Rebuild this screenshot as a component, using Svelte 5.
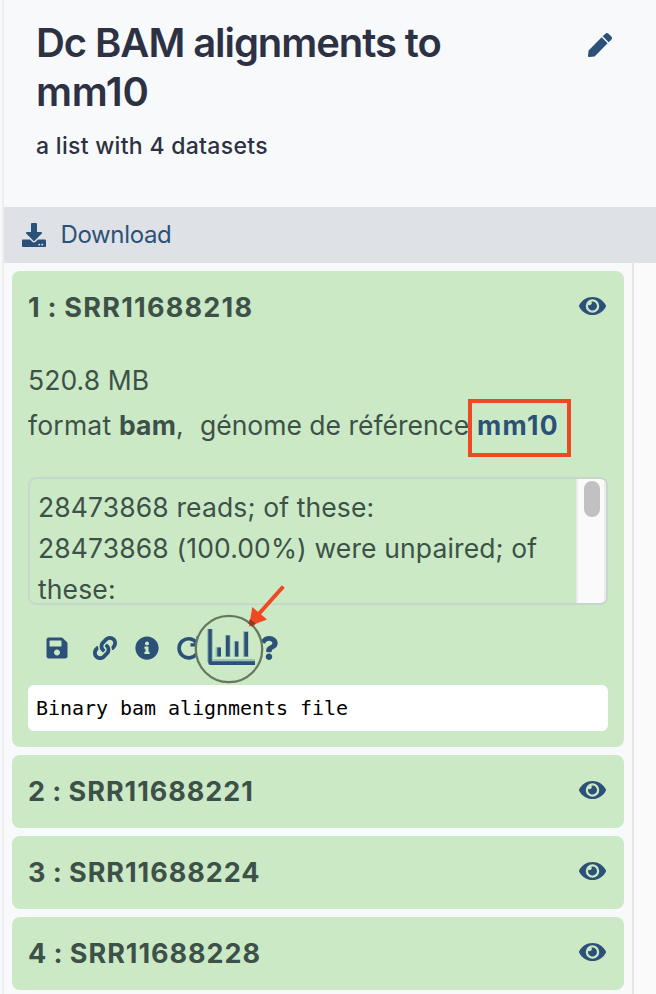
<script>
  const datasets = [
    { id: 2, name: 'SRR11688221' },
    { id: 3, name: 'SRR11688224' },
    { id: 4, name: 'SRR11688228' }
  ];
</script>

{#snippet eye()}
  <svg class="eye" viewBox="0 0 576 512"><path d="M572.52 241.4C518.29 135.59 410.93 64 288 64S57.68 135.64 3.48 241.41a32.35 32.35 0 0 0 0 29.19C57.71 376.41 165.07 448 288 448s230.32-71.64 284.52-177.41a32.35 32.35 0 0 0 0-29.19zM288 400a144 144 0 1 1 144-144 143.93 143.93 0 0 1-144 144zm0-240a95.31 95.31 0 0 0-25.31 3.79 47.85 47.85 0 0 1-66.9 66.9A95.78 95.78 0 1 0 288 160z"/></svg>
{/snippet}

<main class="panel">
  <header>
    <div class="heading">
      <h1>Dc BAM alignments to<br /><span class="build">mm10</span></h1>
      <svg class="pen" viewBox="0 0 512 512"><path d="M290.74 93.24l128.02 128.02-277.99 277.99-114.14 12.6C11.35 513.54-1.56 500.62.14 485.34l12.7-114.22 277.9-277.88zm207.2-19.06l-60.11-60.11c-18.75-18.75-49.16-18.75-67.91 0l-56.55 56.55 128.02 128.02 56.55-56.55c18.75-18.76 18.75-49.16 0-67.91z"/></svg>
    </div>
    <p class="subtitle">a list with 4 datasets</p>
  </header>

  <nav>
    <svg class="download" viewBox="0 0 512 512"><path d="M216 0h80c13.3 0 24 10.7 24 24v168h87.7c17.8 0 26.7 21.5 14.1 34.1L269.7 378.3c-7.5 7.5-19.8 7.5-27.3 0L90.1 226.1c-12.6-12.6-3.7-34.1 14.1-34.1H192V24c0-13.3 10.7-24 24-24zm296 376v112c0 13.3-10.7 24-24 24H24c-13.3 0-24-10.7-24-24V376c0-13.3 10.7-24 24-24h146.7l49 49c20.1 20.1 52.5 20.1 72.6 0l49-49H488c13.3 0 24 10.7 24 24zm-124 88c0-11-9-20-20-20s-20 9-20 20 9 20 20 20 20-9 20-20zm64 0c0-11-9-20-20-20s-20 9-20 20 9 20 20 20 20-9 20-20z"/></svg>
    <span>Download</span>
  </nav>

  <div class="body">
    <div class="list">
      <section class="card open">
        <div class="title"><h2 class="first">1 : SRR11688218</h2>{@render eye()}</div>
        <div class="size">520.8 MB</div>
        <div class="meta">
          <span class="format">format <b>bam</b>,</span><span class="genome">génome de référence</span><b class="ref">mm10</b>
        </div>
        <div class="log">
          <div class="lines">
            <div>28473868 reads; of these:</div>
            <div>28473868 (100.00%) were unpaired; of</div>
            <div>these:</div>
          </div>
          <div class="track"><div class="thumb"></div></div>
        </div>
        <div class="actions">
          <svg class="save" viewBox="0 0 448 512"><path d="M433.941 129.941l-83.882-83.882A48 48 0 0 0 316.118 32H48C21.49 32 0 53.49 0 80v352c0 26.51 21.49 48 48 48h352c26.51 0 48-21.49 48-48V163.882a48 48 0 0 0-14.059-33.941zM224 416c-35.346 0-64-28.654-64-64 0-35.346 28.654-64 64-64s64 28.654 64 64c0 35.346-28.654 64-64 64zm96-304.52V212c0 6.627-5.373 12-12 12H76c-6.627 0-12-5.373-12-12V108c0-6.627 5.373-12 12-12h228.52c3.183 0 6.235 1.264 8.485 3.515l3.48 3.48A11.996 11.996 0 0 1 320 111.48z"/></svg>
          <svg class="link" viewBox="0 0 512 512"><path d="M326.612 185.391c59.747 59.809 58.927 155.698.36 214.59-.11.12-.24.25-.36.37l-67.2 67.2c-59.27 59.27-155.699 59.262-214.96 0-59.27-59.26-59.27-155.7 0-214.96l37.106-37.106c9.84-9.84 26.786-3.3 27.294 10.606.648 17.722 3.826 35.527 9.69 52.721 1.986 5.822.567 12.262-3.783 16.612l-13.087 13.087c-28.026 28.026-28.905 73.66-1.155 101.96 28.024 28.579 74.086 28.749 102.325.51l67.2-67.19c28.191-28.191 28.073-73.757 0-101.83-3.701-3.694-7.429-6.564-10.341-8.569a16.037 16.037 0 0 1-6.947-12.606c-.396-10.567 3.348-21.456 11.698-29.806l21.054-21.055c5.521-5.521 14.182-6.199 20.584-1.731a152.482 152.482 0 0 1 20.522 17.197zM467.547 44.449c-59.261-59.262-155.69-59.27-214.96 0l-67.2 67.2c-.12.12-.25.25-.36.37-58.566 58.892-59.387 154.781.36 214.59a152.454 152.454 0 0 0 20.521 17.196c6.402 4.468 15.064 3.789 20.584-1.731l21.054-21.055c8.35-8.35 12.094-19.239 11.698-29.806a16.037 16.037 0 0 0-6.947-12.606c-2.912-2.005-6.64-4.875-10.341-8.569-28.073-28.073-28.191-73.639 0-101.83l67.2-67.19c28.239-28.239 74.3-28.069 102.325.51 27.75 28.3 26.872 73.934-1.155 101.96l-13.087 13.087c-4.35 4.35-5.769 10.79-3.783 16.612 5.864 17.194 9.042 34.999 9.69 52.721.509 13.906 17.454 20.446 27.294 10.606l37.106-37.106c59.271-59.259 59.271-155.699.001-214.959z"/></svg>
          <svg class="info" viewBox="0 0 512 512"><path d="M256 8C119.043 8 8 119.083 8 256c0 136.997 111.043 248 248 248s248-111.003 248-248C504 119.083 392.957 8 256 8zm0 110c23.196 0 42 18.804 42 42s-18.804 42-42 42-42-18.804-42-42 18.804-42 42-42zm56 254c0 6.627-5.373 12-12 12h-88c-6.627 0-12-5.373-12-12v-24c0-6.627 5.373-12 12-12h12v-64h-12c-6.627 0-12-5.373-12-12v-24c0-6.627 5.373-12 12-12h64c6.627 0 12 5.373 12 12v100h12c6.627 0 12 5.373 12 12v24z"/></svg>
          <svg class="redo" viewBox="0 0 24 24"><path d="M19.4 6.6A9.6 9.6 0 1 0 19.4 18" fill="none" stroke="#2c5178" stroke-width="3.600"/><path d="M13.500 7.300h9.500v3.200h-9.500zM19.500 0h2v8h-2z"/></svg>
          <svg class="help" viewBox="0 0 384 512"><path d="M202.021 0C122.202 0 70.503 32.703 29.914 91.026c-7.363 10.58-5.093 25.086 5.178 32.874l43.138 32.709c10.373 7.865 25.132 6.026 33.253-4.148 25.049-31.381 43.63-49.449 82.757-49.449 30.764 0 68.816 19.799 68.816 49.631 0 22.552-18.617 34.134-48.993 51.164-35.423 19.86-82.299 44.576-82.299 106.405V320c0 13.255 10.745 24 24 24h72.471c13.255 0 24-10.745 24-24v-5.773c0-42.86 125.268-44.645 125.268-160.627C377.504 66.256 286.902 0 202.021 0zM192 373.459c-38.196 0-69.271 31.075-69.271 69.271 0 38.195 31.075 69.27 69.271 69.27s69.271-31.075 69.271-69.271-31.075-69.27-69.271-69.27z"/></svg>
          <!-- magnified chart button with its pointer arrow -->
          <svg class="lens" viewBox="190 580 100 108">
            <circle cx="229" cy="649" r="33.2" fill="#cbe9c5" stroke="#68775f" stroke-width="2.300"/>
            <path fill="#9fc3b1" d="M207 629h6v30h42v3h-48zM215.500 647h5.500v10h-5.500zM225 635h5.700v22H225zM233.700 641h5.300v16h-5.300zM243 631h5.700v26H243z"/>
            <path d="M208.300 629h3.500v32.200H255v3.800h-44.700q-2 0-2-2zM217.300 647.500h3.700v9h-3.700zM226 635.500h3.700v21H226zM235 641.500h3.300v15H235zM244.300 632h3.700v24.500h-3.700z"/>
            <path d="M283.300 586.500L257 616" stroke="#f04822" stroke-width="4"/>
            <path fill="#f04822" d="M252.300 607l14.700 12.500-18 7z"/>
            <path d="M248.700 622.300a33.200 33.200 0 0 1 4.200 3.700M249.500 620l5.500 4.500" fill="none" stroke="#87371f" stroke-width="2"/>
          </svg>
        </div>
        <pre>Binary bam alignments file</pre>
      </section>
      {#each datasets as d}
        <section class="card">
          <div class="title"><h2>{d.id} : {d.name}</h2>{@render eye()}</div>
        </section>
      {/each}
    </div>
  </div>
</main>

<style>
  :global(body) { margin: 0; background: #f8f9fb; overflow: hidden; }
  * { box-sizing: border-box; }
  .panel {
    height: 994px; margin-left: 2px; border-left: 2px solid #ededed; overflow: hidden;
    font-family: Inter, "Liberation Sans", sans-serif; background: #f8f9fb; color: #3d5149;
    white-space: nowrap;
  }
  svg { display: block; flex: none; fill: #2c5178; }
  h1, h2, p, pre { margin: 0; }
  header { height: 207px; padding: 18px 44px 0 32px; color: #2c3143; }
  .heading { display: flex; justify-content: space-between; }
  h1 { font-size: 40px; line-height: 49px; font-weight: 560; letter-spacing: -1.07px; }
  .build { letter-spacing: -0.3px; }
  .pen { width: 24px; height: 24px; margin-top: 15px; }
  .subtitle { margin-top: 15px; font-size: 23px; line-height: 30px; font-weight: 500; letter-spacing: 0.3px; }
  nav {
    height: 56px; background: #dee1e6; color: #2c5178; display: flex; align-items: center;
    padding-left: 18px; gap: 14.5px; font-size: 24px; letter-spacing: -0.35px;
  }
  nav span { margin-bottom: 2px; }
  .download { width: 24px; height: 24px; }
  .body { height: 731px; display: flex; background: #fafafa; }
  .list {
    width: 630px; border-right: 2px solid #e6e6e6; background: #f8f9fb;
    padding: 8px; display: flex; flex-direction: column; gap: 8px;
  }
  .card { flex: none; height: 73px; border-radius: 8px; background: #cbe9c5; padding: 0 16px; font-size: 26.5px; }
  .open { height: 476px; }
  .title { height: 73px; display: flex; align-items: center; justify-content: space-between; }
  .eye { width: 27px; height: 24px; margin: 0 2px 3px 0; }
  h2 { font-size: 27px; line-height: 32px; font-weight: 700; letter-spacing: 0.95px; word-spacing: -1px; }
  .first { letter-spacing: 1.23px; }
  .size { height: 40px; margin-top: 15px; line-height: 42px; letter-spacing: 0.1px; }
  .meta { height: 58px; display: flex; line-height: 52px; }
  .format { width: 172px; letter-spacing: 0.2px; }
  .genome { width: 268px; }
  .ref { color: #2c5178; border: 4px solid #ee4923; width: 103px; height: 58px; padding-left: 5px; line-height: 44px; letter-spacing: 1.3px; }
  .log {
    margin-top: 20px; height: 128px; width: 580px; border: 2px solid #c6d7cd; border-radius: 8px;
    overflow: hidden; display: flex; justify-content: space-between;
  }
  .lines { padding: 8px 0 0 8px; line-height: 41px; letter-spacing: 0.13px; }
  .track { width: 30px; border-left: 2px solid #ebebeb; border-right: 2px solid #ebebeb; background: #fafafa; padding: 2px 0 0 6px; }
  .thumb { width: 16px; height: 36px; border-radius: 8px; background: #c1c1c1; }
  .actions { position: relative; height: 80px; padding: 6px 0 0 17.5px; display: flex; align-items: center; }
  .save { width: 22px; height: 24px; }
  .link { width: 24px; height: 24px; margin-left: 25px; }
  .info { width: 24px; height: 24px; margin-left: 18px; }
  .redo { width: 24px; height: 24px; margin-left: 18px; }
  .help { width: 18px; height: 24px; margin-left: 59px; }
  .lens { position: absolute; left: 162px; top: -25px; width: 100px; height: 108px; }
  pre {
    height: 46px; width: 580px; border-radius: 6px; background: #fff; color: #000;
    padding-left: 8px; line-height: 46px; font-size: 20px; font-family: "DejaVu Sans Mono", monospace;
    letter-spacing: -0.04px;
  }
</style>
